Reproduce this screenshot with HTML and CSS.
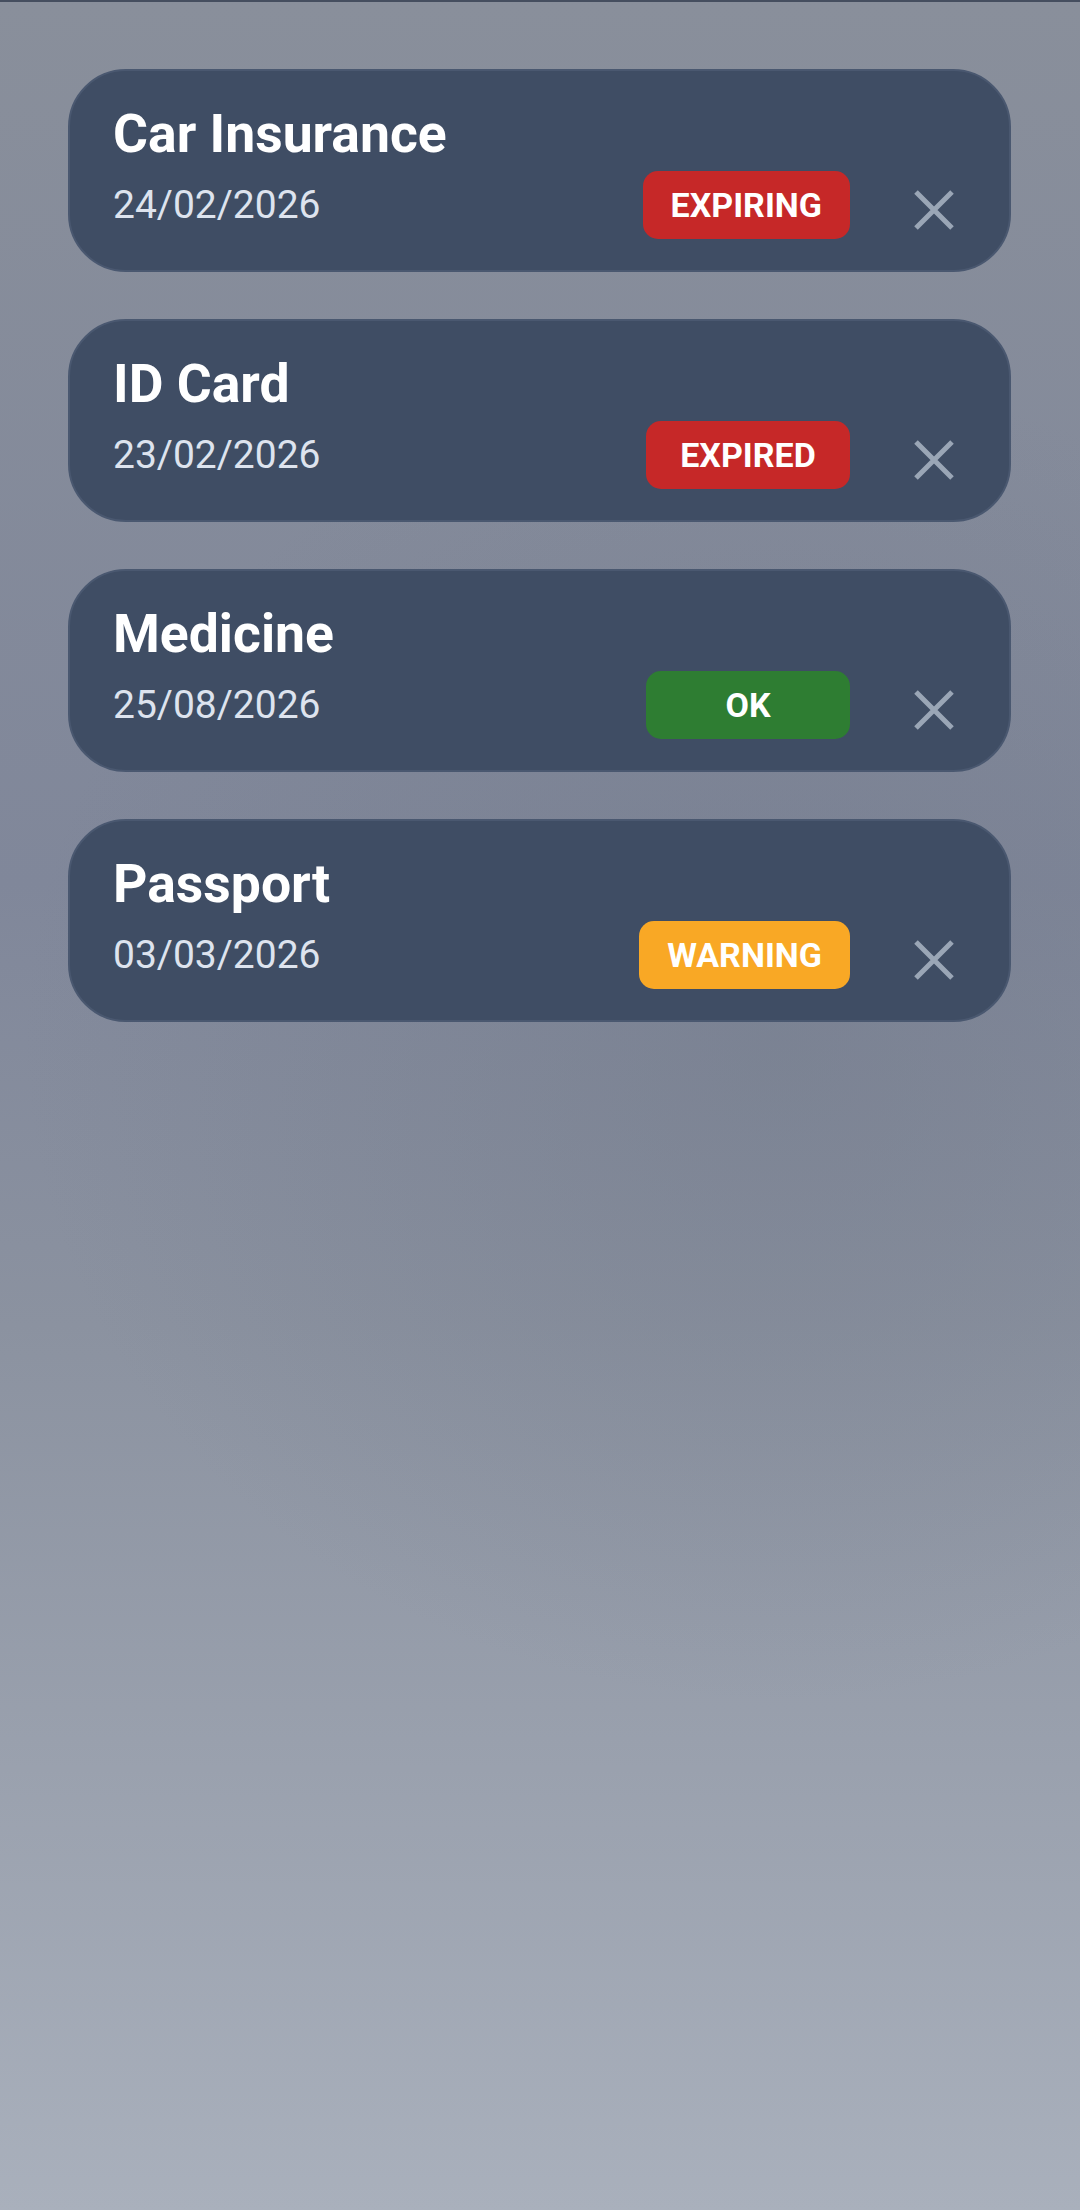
FILE: index.html
```html
<!DOCTYPE html>
<html lang="en">
<head>
    <meta charset="UTF-8">
    <meta name="viewport" content="width=device-width, initial-scale=1.0">
    <title>Reminders</title>
    <link rel="stylesheet" href="styles.css">
</head>
<body>

<div class="status-line"></div>

<div class="reminder-list">
    <div class="reminder-card">
        <div class="reminder-title">Car Insurance</div>
        <div class="reminder-meta">
            <span class="reminder-date">24/02/2026</span>
            <span class="badge badge-red">EXPIRING</span>
            <button class="close-btn" aria-label="Remove">
                <svg viewBox="0 0 42 42" width="42" height="42"><path d="M3 3 L39 39 M39 3 L3 39"/></svg>
            </button>
        </div>
    </div>

    <div class="reminder-card">
        <div class="reminder-title">ID Card</div>
        <div class="reminder-meta">
            <span class="reminder-date">23/02/2026</span>
            <span class="badge badge-red">EXPIRED</span>
            <button class="close-btn" aria-label="Remove">
                <svg viewBox="0 0 42 42" width="42" height="42"><path d="M3 3 L39 39 M39 3 L3 39"/></svg>
            </button>
        </div>
    </div>

    <div class="reminder-card">
        <div class="reminder-title">Medicine</div>
        <div class="reminder-meta">
            <span class="reminder-date">25/08/2026</span>
            <span class="badge badge-green">OK</span>
            <button class="close-btn" aria-label="Remove">
                <svg viewBox="0 0 42 42" width="42" height="42"><path d="M3 3 L39 39 M39 3 L3 39"/></svg>
            </button>
        </div>
    </div>

    <div class="reminder-card">
        <div class="reminder-title">Passport</div>
        <div class="reminder-meta">
            <span class="reminder-date">03/03/2026</span>
            <span class="badge badge-orange">WARNING</span>
            <button class="close-btn" aria-label="Remove">
                <svg viewBox="0 0 42 42" width="42" height="42"><path d="M3 3 L39 39 M39 3 L3 39"/></svg>
            </button>
        </div>
    </div>
</div>

</body>
</html>
```

FILE: styles.css
```css
html {
    min-height: 100%;
    background:
        radial-gradient(ellipse 70% 30% at 72% 47%, rgba(112, 120, 136, 0.45), rgba(112, 120, 136, 0) 100%),
        linear-gradient(#898f9b 0%, #80879a 40%, #8b92a0 60%, #a9b0bc 100%);
}
body {
    margin: 0;
    min-height: 2210px;
    font-family: Roboto, "Noto Sans", sans-serif;
}
.status-line {
    height: 2px;
    background-color: #454e5f;
}
.reminder-list {
    display: flex;
    flex-direction: column;
    gap: 47px;
    padding: 67px 69px 0 68px;
}
.reminder-card {
    box-sizing: border-box;
    height: 203px;
    padding: 32px 54px 31px 43px;
    background-color: #3f4d64;
    border: 2px solid #4a5870;
    border-radius: 58px;
}
.reminder-title {
    font-size: 53.5px;
    line-height: 62px;
    font-weight: 700;
    color: #ffffff;
    margin-bottom: 6px;
}
.reminder-meta {
    display: flex;
    align-items: center;
    height: 68px;
}
.reminder-date {
    flex: 1;
    font-size: 39px;
    line-height: 46px;
    color: #dde3ee;
}
.badge {
    box-sizing: border-box;
    min-width: 204px;
    height: 68px;
    padding: 0 28px;
    border-radius: 15px;
    font-size: 34px;
    font-weight: 700;
    line-height: 68px;
    text-align: center;
    color: #ffffff;
}
.badge-red {
    background-color: #c62828;
}
.badge-green {
    background-color: #2e7d32;
}
.badge-orange {
    background-color: #f9a825;
}
.close-btn {
    display: flex;
    margin: 9px 0 0 63px;
    padding: 0;
    background: none;
    border: none;
    cursor: pointer;
}
.close-btn svg {
    display: block;
    stroke: #9aa6b6;
    stroke-width: 5;
    fill: none;
}
```
